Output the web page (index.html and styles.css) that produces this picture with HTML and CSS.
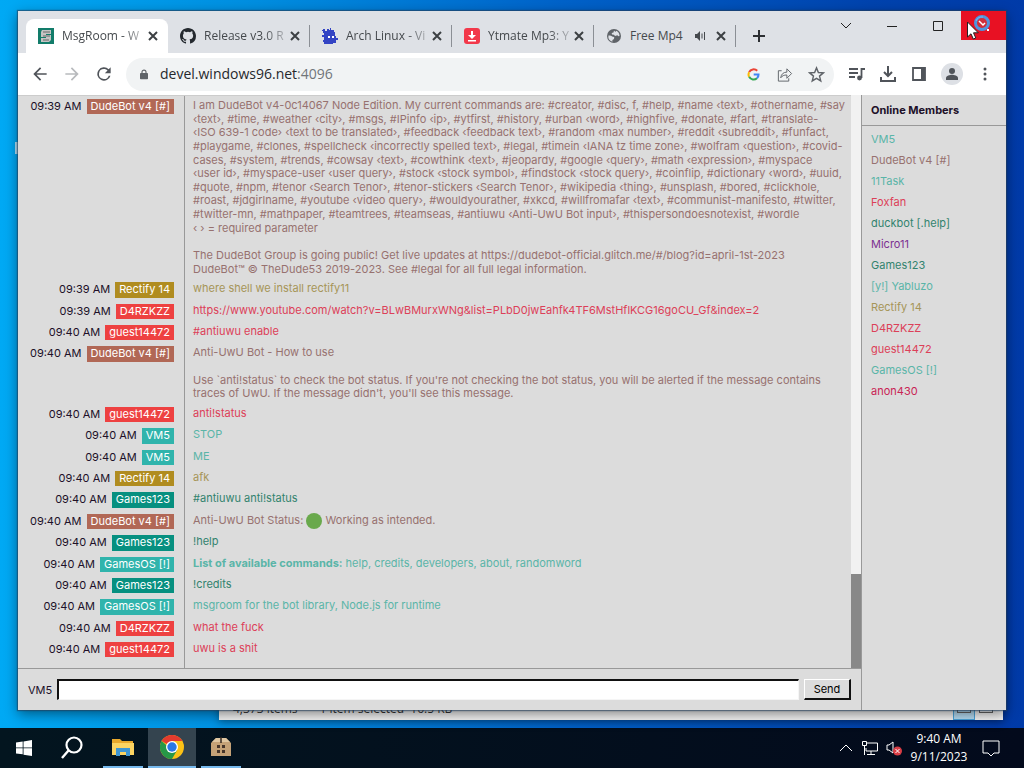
FILE: index.html
```html
<!DOCTYPE html>
<html lang="en"><head><meta charset="utf-8"><title>MsgRoom</title><link rel="stylesheet" href="styles.css"></head>
<body>
<main class="desktop">
<span class="desk-icon" aria-hidden="true"></span>
<section class="explorer"><div class="statusbar"><span>4,373 items</span><span>1 item selected&nbsp; 16.5 KB</span><span class="views"><i class="view on"></i><i class="view"></i></span></div></section>
<section class="window">
<header class="tabstrip">
<div class="tab active"><svg class="fav" viewBox="0 0 16 16"><path fill="#127c6a" d="M0 0h16v16H0z"/><path fill="#c4c4c4" d="M4 2h9v4H8v1h5v5l-2 2H3v-4h5V9H3V4z"/><path d="M5 4h7M5 8h7M5 12h6" stroke="#666" fill="none"/></svg><a class="title" href="#">MsgRoom - W</a><button class="x" aria-label="Close tab"><svg viewBox="0 0 10 10"><path d="M1 1l8 8M9 1L1 9"/></svg></button></div>
<div class="tab"><svg class="fav" viewBox="0 0 16 16"><path fill="#24292f" d="M8 0C3.58 0 0 3.58 0 8c0 3.54 2.29 6.53 5.47 7.59.4.07.55-.17.55-.38v-1.49c-2.01.37-2.53-.49-2.69-.94-.09-.23-.48-.94-.82-1.13-.28-.15-.68-.52-.01-.53.63-.01 1.08.58 1.23.82.72 1.21 1.87.87 2.33.66.07-.52.28-.87.51-1.07-1.78-.2-3.64-.89-3.64-3.95 0-.87.31-1.59.82-2.15-.08-.2-.36-1.02.08-2.12 0 0 .67-.21 2.2.82a7.5 7.5 0 0 1 4 0c1.53-1.04 2.2-.82 2.2-.82.44 1.1.16 1.92.08 2.12.51.56.82 1.27.82 2.15 0 3.07-1.87 3.75-3.65 3.95.29.25.54.73.54 1.48v2.2c0 .21.15.46.55.38A8.01 8.01 0 0 0 16 8c0-4.42-3.58-8-8-8z"/></svg><a class="title" href="#">Release v3.0 R</a><button class="x" aria-label="Close tab"><svg viewBox="0 0 10 10"><path d="M1 1l8 8M9 1L1 9"/></svg></button></div>
<div class="tab"><svg class="fav" viewBox="0 0 16 16"><path fill="#3344c4" d="M1 1h2v2h2V1h2v1h1V0h1v2h3v2h1v4h1v2h2v2h-2v3h-3v1H2v-2H1v-2h1V9H0V7h2V5H1V3H0V2h1z"/><path fill="#fff" d="M6 8h2v2H6zM10 8h2v2h-2z"/></svg><a class="title" href="#">Arch Linux - Vi</a><button class="x" aria-label="Close tab"><svg viewBox="0 0 10 10"><path d="M1 1l8 8M9 1L1 9"/></svg></button></div>
<div class="tab"><svg class="fav" viewBox="0 0 16 16"><rect width="16" height="16" rx="3" fill="#f2384a"/><path fill="#fff" d="M7 3h2v4h3l-4 4-4-4h3zM4 12h8v1.5H4z"/></svg><a class="title" href="#">Ytmate Mp3: Y</a><button class="x" aria-label="Close tab"><svg viewBox="0 0 10 10"><path d="M1 1l8 8M9 1L1 9"/></svg></button></div>
<div class="tab last"><svg class="fav" viewBox="0 0 16 16"><circle cx="8" cy="8" r="7" fill="#5f6368"/><path fill="#dee1e6" d="M2.4 7.5c2 0 3.3.3 4.3 1.2l1.5.3-.2 2-1.600 1v1.700A5.700 5.700 0 0 1 2.400 7.500zM8 2.400l-.5 2-1.800.6.3 1.500 2 .3 1 1.200 2.300-.7 1.200 1 1-.3A5.600 5.600 0 0 0 10 2.700L9.500 4z"/></svg><a class="title" href="#">Free Mp4</a><svg class="audio" viewBox="0 0 12 12"><path fill="#45494d" d="M1 4h2l3-3v10L3 8H1z"/><path d="M8 3.500v5M10.500 2v8" stroke="#45494d" fill="none"/></svg><button class="x" aria-label="Close tab"><svg viewBox="0 0 10 10"><path d="M1 1l8 8M9 1L1 9"/></svg></button></div>
<button class="newtab" aria-label="New tab"><svg viewBox="0 0 12 12"><path d="M6 0v12M0 6h12"/></svg></button>
<div class="caption">
<button aria-label="Search tabs"><svg viewBox="0 0 12 12"><path d="M1 3l5 5 5-5"/></svg></button><button aria-label="Minimize"><svg viewBox="0 0 12 12"><path d="M1 6.500h10"/></svg></button><button aria-label="Maximize"><svg viewBox="0 0 12 12"><path d="M1.500 1.500h9v9h-9z"/></svg></button><button class="close" aria-label="Close"><svg class="busy" viewBox="0 0 16 16"><circle cx="8" cy="8" r="6.500" fill="#d0303c" stroke="#4f95de" stroke-width="3"/><path d="M5 6l4 4 2-2" stroke="#fff" stroke-width="1.500"/><path d="M2 6a6.500 6.500 0 0 1 7-4" stroke="#7db8ee" fill="none"/><path d="M13 14h2v2h-2z" fill="#fff" stroke="none"/></svg></button>
</div>
<svg class="pointer" viewBox="0 0 12 19"><path fill="#fff" stroke="#222" d="M.5 1v15l3.500-3.200 2.300 5.200 2.500-1-2.300-5.200h4.800z"/></svg>
</header>
<nav class="toolbar">
<button class="tool" aria-label="Back"><svg viewBox="0 0 24 24"><path fill="#50545a" d="M20 11H7.830l5.590-5.590L12 4l-8 8 8 8 1.410-1.410L7.830 13H20z"/></svg></button>
<button class="tool" aria-label="Forward"><svg viewBox="0 0 24 24"><path fill="#b8babd" d="M4 13h12.170l-5.590 5.590L12 20l8-8-8-8-1.410 1.410L16.170 11H4z"/></svg></button>
<button class="tool" aria-label="Reload"><svg viewBox="0 0 24 24"><path fill="#50545a" d="M17.650 6.350A8 8 0 1 0 19.730 14h-2.080A6 6 0 1 1 12 6c1.660 0 3.140.69 4.220 1.780L13 11h7V4z"/></svg></button>
<div class="omnibox"><svg class="lock" viewBox="0 0 10 12"><rect y="4" width="10" height="8" rx="1" fill="#5f6368"/><path d="M2.500 5V3a2.500 2.500 0 0 1 5 0v2" fill="none" stroke="#5f6368" stroke-width="1.400"/></svg><div class="url">devel.windows96.net<span>:4096</span></div>
<svg class="g" viewBox="0 0 14 14"><g fill="none" stroke-width="2.200"><path stroke="#ea4335" d="M11 3a5.400 5.400 0 0 0-8.700 1.500"/><path stroke="#fbbc05" d="M2.300 4.500a5.400 5.400 0 0 0 0 5"/><path stroke="#34a853" d="M2.300 9.500a5.400 5.400 0 0 0 8.400 1.500"/><path stroke="#4285f4" d="M10.700 11a5 5 0 0 0 1.700-4H7.200"/></g></svg>
<svg class="ic" viewBox="0 0 18 18"><path d="M6 5H2.500v11h11v-3M5 12.500c.5-4 3-6 6.500-6V3l5 5-5 5V9.500c-3 0-5 .8-6.500 3z"/></svg>
<svg class="ic" viewBox="0 0 18 18"><path stroke-width="1.500" d="M9 2l2 4.900 5.200.4-4 3.400 1.300 5.100L9 13l-4.500 2.800 1.300-5.100-4-3.400L7 6.900z"/></svg></div>
<div class="tools">
<svg viewBox="0 0 18 18"><path d="M1 4h9M1 8h9M1 12h6M13.500 13V4H17" stroke-width="1.800"/><circle cx="11.500" cy="13" r="2.400" fill="#50545a" stroke="none"/></svg>
<svg viewBox="0 0 18 18"><path d="M9 1v10M5 7l4 4 4-4M2 12v4h14v-4" stroke-width="2"/></svg>
<svg viewBox="0 0 18 18"><path d="M3 3h12v12H3z" stroke-width="1.800"/><path fill="#50545a" stroke="none" d="M11 3h4v12h-4z"/></svg>
<svg class="avatar" viewBox="0 0 22 22"><circle cx="11" cy="11" r="11" fill="#dde0e5" stroke="none"/><circle cx="11" cy="8" r="3" fill="#50545a" stroke="none"/><path fill="#50545a" stroke="none" d="M5 17v-2c0-2 4-3.200 6-3.200s6 1.200 6 3.200v2z"/></svg>
<svg viewBox="0 0 18 18"><g fill="#50545a" stroke="none"><circle cx="9" cy="4" r="1.500"/><circle cx="9" cy="9" r="1.500"/><circle cx="9" cy="14" r="1.500"/></g></svg>
</div>
</nav>
<div class="page">
<div class="room">
<div class="log">
<div class="msg brown"><div class="who"><time>09:39 AM</time><b>DudeBot v4 [#]</b></div><p>I am DudeBot v4-0c14067 Node Edition. My current commands are: #creator, #disc, f, #help, #name ‹text›, #othername, #say
‹text›, #time, #weather ‹city›, #msgs, #IPinfo ‹ip›, #ytfirst, #history, #urban ‹word›, #highfive, #donate, #fart, #translate-
‹ISO 639-1 code› ‹text to be translated›, #feedback ‹feedback text›, #random ‹max number›, #reddit ‹subreddit›, #funfact,
#playgame, #clones, #spellcheck ‹incorrectly spelled text›, #legal, #timein ‹IANA tz time zone›, #wolfram ‹question›, #covid-
cases, #system, #trends, #cowsay ‹text›, #cowthink ‹text›, #jeopardy, #google ‹query›, #math ‹expression›, #myspace
‹user id›, #myspace-user ‹user query›, #stock ‹stock symbol›, #findstock ‹stock query›, #coinflip, #dictionary ‹word›, #uuid,
#quote, #npm, #tenor ‹Search Tenor›, #tenor-stickers ‹Search Tenor›, #wikipedia ‹thing›, #unsplash, #bored, #clickhole,
#roast, #jdgirlname, #youtube ‹video query›, #wouldyourather, #xkcd, #willfromafar ‹text›, #communist-manifesto, #twitter,
#twitter-mn, #mathpaper, #teamtrees, #teamseas, #antiuwu ‹Anti-UwU Bot input›, #thispersondoesnotexist, #wordle
‹ › = required parameter

The DudeBot Group is going public! Get live updates at https://dudebot-official.glitch.me/#/blog?id=april-1st-2023
DudeBot™ © TheDude53 2019-2023. See #legal for all full legal information.</p></div>
<div class="msg gold"><div class="who"><time>09:39 AM</time><b>Rectify 14</b></div><p>where shell we install rectify11</p></div>
<div class="msg red"><div class="who"><time>09:39 AM</time><b>D4RZKZZ</b></div><p><a href="#">https://www.youtube.com/watch?v=BLwBMurxWNg&amp;list=PLbD0jwEahfk4TF6MstHflKCG16goCU_Gf&amp;index=2</a></p></div>
<div class="msg red"><div class="who"><time>09:40 AM</time><b>guest14472</b></div><p>#antiuwu enable</p></div>
<div class="msg brown"><div class="who"><time>09:40 AM</time><b>DudeBot v4 [#]</b></div><p>Anti-UwU Bot - How to use

Use `anti!status` to check the bot status. If you're not checking the bot status, you will be alerted if the message contains
traces of UwU. If the message didn't, you'll see this message.</p></div>
<div class="msg red"><div class="who"><time>09:40 AM</time><b>guest14472</b></div><p>anti!status</p></div>
<div class="msg aqua"><div class="who"><time>09:40 AM</time><b>VM5</b></div><p>STOP</p></div>
<div class="msg aqua"><div class="who"><time>09:40 AM</time><b>VM5</b></div><p>ME</p></div>
<div class="msg gold"><div class="who"><time>09:40 AM</time><b>Rectify 14</b></div><p>afk</p></div>
<div class="msg green"><div class="who"><time>09:40 AM</time><b>Games123</b></div><p>#antiuwu anti!status</p></div>
<div class="msg brown"><div class="who"><time>09:40 AM</time><b>DudeBot v4 [#]</b></div><p>Anti-UwU Bot Status: <i class="dot"></i> Working as intended.</p></div>
<div class="msg green"><div class="who"><time>09:40 AM</time><b>Games123</b></div><p>!help</p></div>
<div class="msg aqua"><div class="who"><time>09:40 AM</time><b>GamesOS [!]</b></div><p><strong>List of available commands:</strong> help, credits, developers, about, randomword</p></div>
<div class="msg green"><div class="who"><time>09:40 AM</time><b>Games123</b></div><p>!credits</p></div>
<div class="msg aqua"><div class="who"><time>09:40 AM</time><b>GamesOS [!]</b></div><p>msgroom for the bot library, Node.js for runtime</p></div>
<div class="msg red"><div class="who"><time>09:40 AM</time><b>D4RZKZZ</b></div><p>what the fuck</p></div>
<div class="msg red"><div class="who"><time>09:40 AM</time><b>guest14472</b></div><p>uwu is a shit</p></div>
<div class="msg rest"><div class="who"></div></div>
</div>
<div class="scroll"><div class="thumb"></div></div>
<form class="compose"><label for="text">VM5</label><input id="text" type="text" autofocus><button type="button">Send</button></form>
</div>
<aside class="members"><h2>Online Members</h2>
<ul><li class="aqua">VM5</li><li class="brown">DudeBot v4 [#]</li><li class="aqua">11Task</li><li class="red">Foxfan</li><li class="green">duckbot [.help]</li><li class="purple">Micro11</li><li class="green">Games123</li><li class="aqua">[y!] Yabluzo</li><li class="gold">Rectify 14</li><li class="red">D4RZKZZ</li><li class="red">guest14472</li><li class="aqua">GamesOS [!]</li><li class="crimson">anon430</li></ul></aside>
</div>
</section>
</main>
<footer class="taskbar">
<button class="task" aria-label="Start"><svg viewBox="0 0 16 16"><path fill="#fff" d="M0 2.500L6.700 1.500v6H0zM7.500 1.400L16 0v7.500H7.500zM0 8.300h6.700v6L0 13.500zM7.500 8.300H16V16l-8.500-1.300z"/></svg></button>
<button class="task" aria-label="Search"><svg class="lg" viewBox="0 0 24 24"><circle cx="14" cy="9" r="7.500" fill="none" stroke="#fff" stroke-width="2.200"/><path d="M8.500 14.500L2 22" stroke="#fff" stroke-width="2.400"/></svg></button>
<button class="task open" aria-label="File Explorer"><svg class="lg" viewBox="0 0 24 24"><path fill="#e9a92c" d="M1 4h8l2 2h11v14H1z"/><path fill="#fcd462" d="M1 8h22v12H1z"/><path fill="#3f96d2" d="M5 21v-8h14v8h-4v-4H9v4z"/></svg></button>
<button class="task open current" aria-label="Chrome"><svg class="lg" viewBox="0 0 24 24"><circle cx="12" cy="12" r="12" fill="#fbc116"/><path fill="#e33b2e" d="M12 12L1.600 6A12 12 0 0 1 22.400 6H12z"/><path fill="#279847" d="M1.600 6A12 12 0 0 0 12 24l5.200-9H12z"/><circle cx="12" cy="12" r="6" fill="#fff"/><circle cx="12" cy="12" r="4.700" fill="#2a78e4"/></svg></button>
<button class="task open" aria-label="Package"><svg class="lg" viewBox="0 0 24 24"><path fill="#c5a277" d="M2 8l5-5h10l5 5v13H2z"/><path fill="#e0c7a2" d="M3 7l4-4h10l4 4z"/><path stroke="#352820" fill="none" stroke-width="1.500" d="M12 2v6"/><path fill="#46352a" d="M8 10h3v3H8zM13 10h3v3h-3zM8 15h3v3H8zM13 15h3v3h-3z"/></svg></button>
<div class="tray">
<svg viewBox="0 0 16 16"><path d="M2 11l6-6 6 6"/></svg>
<svg viewBox="0 0 16 16"><path d="M5 3h10.500v8H4V8M9 11v3M5 14.500h8M.5 1.500h4v4h-4zM2.500 6v9"/></svg>
<svg viewBox="0 0 16 16"><path d="M1 5h2l4-3v11L3 10H1z"/><circle cx="11.500" cy="11" r="4.500" fill="#d93d45" stroke="none"/><path d="M9.500 9l4 4M13.500 9l-4 4"/></svg>
<div class="clock"><time>9:40 AM</time><time>9/11/2023</time></div>
<svg class="note" viewBox="0 0 18 18"><path d="M1 2h16v12h-5l-3 3-3-3H1z"/></svg>
</div>
</footer>
</body></html>
```
FILE: styles.css
```css
* { box-sizing: border-box; }
body { margin: 0; height: 100vh; display: flex; flex-direction: column; overflow: hidden; font-family: "Open Sans", "Noto Sans", sans-serif; background: #06182a; }
button { border: 0; background: none; padding: 0; margin: 0; display: grid; place-items: center; }
a { color: inherit; text-decoration: none; }
svg { display: block; flex: none; }
.desktop { flex: 1; position: relative; background: linear-gradient(90deg, #00a9f4 0%, #008ee0 25%, #0062c9 55%, #0043ae 85%, #003aa8 100%); }
.desk-icon { position: absolute; left: 15px; top: 142px; width: 3px; height: 12px; background: #b5e2f8; }

.window { position: absolute; top: 11px; right: 18px; bottom: 18px; left: 18px; display: flex; flex-direction: column; background: #fff; box-shadow: 0 0 1px 1px #24405c99, 0 4px 12px #0007; }
.explorer { position: absolute; left: 219px; right: 21px; bottom: 8px; height: 300px; display: flex; align-items: flex-end; background: #f3f3f3; box-shadow: 0 2px 8px #0006; }
.statusbar { flex: 1; height: 22px; padding: 0 6px 0 14px; display: flex; gap: 22px; font-size: 12px; line-height: 22px; color: #333; }
.views { margin-left: auto; display: flex; }
.view { width: 22px; height: 22px; display: grid; place-items: center; }
.view::after { content: ""; width: 12px; height: 6px; border: 1px solid #666; }
.view.on { background: #b5dcf2; border: 1px solid #4ba5dc; }

.tabstrip { height: 42px; flex: none; padding: 8px 0 0 8px; display: flex; background: #dee1e6; position: relative; }
.tab { width: 142px; flex: 0 1 142px; min-width: 0; height: 34px; padding: 0 9px 0 12px; display: flex; align-items: center; border-right: 1px solid #8b8f95; border-image: linear-gradient(transparent 7px, #8b8f95 7px, #8b8f95 27px, transparent 27px) 1; }
.tab.active { background: #fff; border-radius: 8px 8px 0 0; border-image: none; border-color: #fff; }
.fav { width: 16px; height: 16px; }
.title { flex: 1; margin: 0 2px 0 8px; font-size: 12px; line-height: 16px; color: #45494d; white-space: nowrap; -webkit-mask-image: linear-gradient(90deg, #000 60px, #0003 84px); mask-image: linear-gradient(90deg, #000 60px, #0003 84px); }
.last .title { -webkit-mask-image: none; mask-image: none; }
.x svg { width: 10px; height: 10px; stroke: #3c4043; stroke-width: 2; }
.audio { width: 12px; height: 12px; margin-right: 10px; }
.newtab { width: 46px; }
.newtab svg { width: 12px; height: 12px; stroke: #2c2f33; stroke-width: 2; }
.caption { margin: -8px 0 0 auto; display: flex; align-items: flex-start; }
.caption button { width: 46px; height: 29px; }
.caption svg { width: 12px; height: 12px; fill: none; stroke: #222; }
.caption .close { width: 45px; background: #e81123; }
.caption .busy { width: 16px; height: 16px; margin: -6px 0 0 -4px; }
.pointer { position: absolute; right: 27px; top: 10px; width: 12px; height: 19px; }

.toolbar { height: 42px; flex: none; display: flex; align-items: center; padding: 0 12px 0 6px; }
.tool { width: 32px; height: 32px; }
.tool svg { width: 20px; height: 20px; }
.omnibox { flex: 1; height: 33px; margin-left: 6px; padding: 0 9px 0 14px; display: flex; align-items: center; border-radius: 17px; background: #f1f3f4; }
.lock { width: 8px; height: 11px; }
.url { flex: 1; margin-left: 12px; font-size: 14px; line-height: 20px; color: #25282c; }
.url span { color: #70757a; }
.g { width: 13px; height: 13px; margin-right: 16px; }
.ic { width: 17px; height: 17px; fill: none; stroke: #5f6368; }
.ic + .ic { margin-left: 15px; }
.tools { margin-left: 14px; display: flex; align-items: center; gap: 13px; }
.tools svg { width: 18px; height: 18px; fill: none; stroke: #50545a; }
.tools .avatar { width: 22px; height: 22px; }

.page { flex: 1; min-height: 0; display: grid; grid-template-columns: 1fr 145px; background: #dcdcdc; font-family: Inter, Roboto, sans-serif; font-size: 11px; color: #201028; }
.room { min-width: 0; min-height: 0; display: grid; grid-template: 1fr 42px / 1fr 10px; }
.log { min-width: 0; min-height: 0; overflow: hidden; display: flex; flex-direction: column; border-top: 1px solid #ccc; }
.msg { display: flex; }
.who { width: 167px; flex: none; padding: 3px 10px 3px 0; display: flex; align-items: flex-start; justify-content: flex-end; gap: 5px; border-right: 1px solid #999; line-height: 1.4; }
.who b { padding: 0 4px; color: #fff; font-weight: 400; background: var(--badge); }
.msg p { margin: 0; padding: 3px 0 3px 8px; line-height: 1.24; white-space: pre; color: var(--ink); }
.rest { flex: 1; }
.brown { --badge: #b16856; --ink: #97716f; }
.gold { --badge: #b08c20; --ink: #a69558; }
.red { --badge: #ee4141; --ink: #dc4058; }
.aqua { --badge: #30b4ac; --ink: #5ab5a8; }
.green { --badge: #079080; --ink: #32836e; }
.purple { --ink: #7c3292; }
.crimson { --ink: #c92455; }
.dot { display: inline-block; width: 16px; height: 16px; margin: -3px 0; border-radius: 50%; vertical-align: middle; background: #69a94c; }
.scroll { background: #f1f1f1; display: flex; align-items: flex-end; }
.thumb { width: 100%; height: 94px; background: #888; }
.compose { grid-column: 1 / -1; display: flex; align-items: center; gap: 5px; padding: 0 10px; border-top: 1px solid #999; }
.compose input { flex: 1; min-width: 0; height: 21px; padding: 0 2px; border: solid; border-width: 2px 1px 1px 2px; border-color: #111 #f5f5f5 #f5f5f5 #111; background: #fff; font: inherit; outline: 0; }
.compose button { width: 47px; height: 21px; border: solid; border-width: 1px 2px 2px 1px; border-color: #fff #111 #111 #fff; background: #dcdcdc; font: inherit; }
.members { border-left: 1px solid #999; }
.members h2 { margin: 0; height: 31px; padding-left: 9px; border-bottom: 1px solid #999; font-size: 11px; line-height: 31px; font-weight: 700; }
.members ul { list-style: none; margin: 0; padding: 3px 0 0 9px; }
.members li { height: 21px; line-height: 21px; color: var(--ink); }

.taskbar { height: 40px; flex: none; display: flex; background: linear-gradient(90deg, #03151f, #030a1c); }
.task { width: 48px; height: 40px; }
.task svg { width: 16px; height: 16px; }
.task svg.lg { width: 24px; height: 24px; }
.task.open { border-bottom: 2px solid #76b9ed; width: 40px; margin: 0 5px 0 7px; }
.task.current { width: 48px; margin: 0; background: #34444f; }
.task.current + .open { margin-left: 5px; }
.tray { margin-left: auto; padding-right: 24px; display: flex; align-items: center; gap: 8px; color: #fff; }
.tray svg { width: 16px; height: 16px; fill: none; stroke: #fff; }
.clock { width: 58px; display: grid; justify-items: center; text-align: center; font-size: 12px; line-height: 18px; }
.tray .note { width: 18px; height: 18px; margin-left: 6px; }
```
